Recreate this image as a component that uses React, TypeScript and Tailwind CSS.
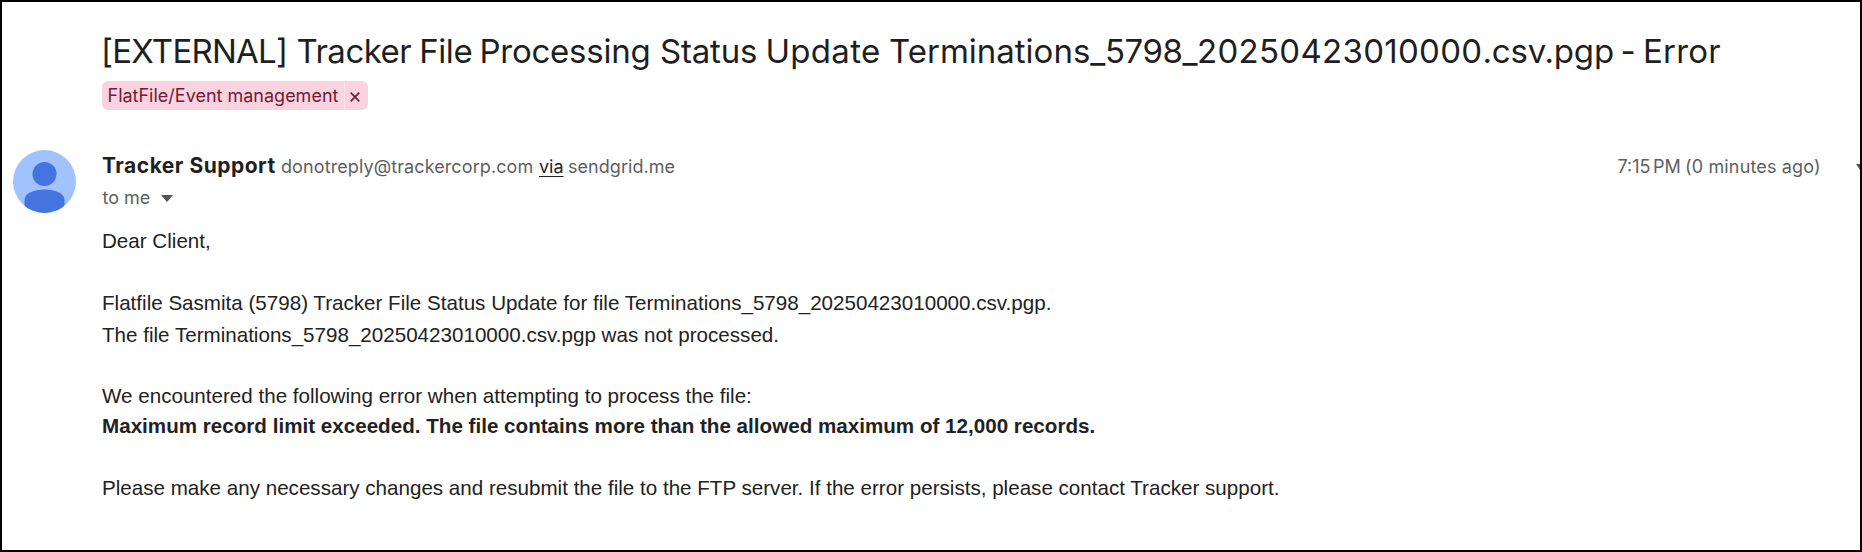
function Avatar() {
  return (
    <svg viewBox="0 0 64 64" className="block size-16" aria-hidden="true">
      <defs>
        <clipPath id="avatar-disc">
          <circle cx="31.5" cy="31.5" r="31.5" />
        </clipPath>
      </defs>
      <circle cx="31.5" cy="31.5" r="31.5" fill="#a0c3ff" />
      <g clipPath="url(#avatar-disc)" fill="#4374e0">
        <circle cx="31.5" cy="24" r="12" />
        <path d="M11.5 64V50C11.500 43 21.500 39.500 31.500 39.500s20 3.500 20 10.500v14z" />
      </g>
    </svg>
  );
}

function Subject() {
  return (
    <h1 className="flex h-[46px] text-[33px] leading-[46px] whitespace-pre text-[#1f1f1f]">
      <span className="w-[195.5px] tracking-[-0.75px]">[EXTERNAL]</span>
      <span className="w-[122.7px] tracking-[-0.5px]">Tracker</span>
      <span className="w-[60.3px] tracking-[-0.4px]">File</span>
      <span className="w-[180.5px] tracking-[-0.25px]">Processing</span>
      <span className="w-[105.5px] tracking-[-0.2px]">Status</span>
      <span className="w-[123.5px] tracking-[0.3px]">Update</span>
      <span className="w-[216px]">Terminations_</span>
      <span className="w-[92px] tracking-[-0.45px]">5798_</span>
      <span className="w-[285.5px] tracking-[0.3px]">20250423010000</span>
      <span className="w-[138px] tracking-[-0.2px]">.csv.pgp</span>
      <span className="w-[22.5px]">-</span>
      <span className="tracking-[0.2px]">Error</span>
    </h1>
  );
}

function Label() {
  return (
    <div className="flex h-[29px] w-[266px] overflow-hidden rounded-[6px] bg-[#fbd3e0] text-[#711a36]">
      <span className="w-[243px] border-r border-[#fde4ec] pl-[5.5px] text-[18px] leading-[29px] whitespace-nowrap">
        FlatFile/Event management
      </span>
      <span className="flex flex-1 items-center pt-[3px] pl-[5px]">
        <svg viewBox="0 0 10 10" className="size-[10px]" fill="none" stroke="#711a36" strokeWidth="1.7" aria-hidden="true">
          <path d="M.7.7l8.6 8.6M9.3.7L.7 9.3" />
        </svg>
      </span>
    </div>
  );
}

export default function App() {
  return (
    <main className="h-[552px] w-[1862px] overflow-hidden border-2 border-black bg-white font-['Inter',sans-serif]">
      <header className="pt-[26px] pl-[99px]">
        <Subject />
        <div className="mt-[7px] pl-px">
          <Label />
        </div>
      </header>
      <section className="mt-[40px] flex pl-[11px]">
        <Avatar />
        <div className="ml-[25px] flex-1">
          <div className="flex h-8 items-baseline text-[18px] leading-[30px] whitespace-nowrap text-[#5e5e5e]">
            <span className="w-[179px] text-[21px] leading-[31px] font-bold tracking-[0.5px] text-[#1f1f1f]">Tracker Support</span>
            <span className="w-[258px] tracking-[0.1px]">donotreply@trackercorp.com</span>
            <span className="w-[29px] text-[#222] underline underline-offset-[3px]">via</span>
            <span className="tracking-[0.05px]">sendgrid.me</span>
            <span className="ml-auto flex">
              <span className="w-[35.5px]">7:15</span>
              <span className="w-[32px]">PM</span>
              <span className="w-[136px] tracking-[0.15px]">(0 minutes ago)</span>
            </span>
            <svg viewBox="0 0 4 8" className="ml-[35px] h-2 w-1 -translate-y-[2px]" aria-hidden="true">
              <path d="M0 1h4v6z" fill="#555" />
            </svg>
          </div>
          <div className="flex h-8 items-center text-[18px] leading-8 text-[#5e5e5e]">
            <span className="w-[59px] pl-[0.5px]">to me</span>
            <svg viewBox="0 0 12 7" className="h-[7px] w-3" aria-hidden="true">
              <path d="M0 0h12L6 7z" fill="#555" />
            </svg>
          </div>
        </div>
      </section>
      <article className="mt-[12px] pl-[100px] font-['Liberation_Sans',Arial,sans-serif] text-[20.6px] whitespace-nowrap text-[#222]">
        <p className="h-[62px] leading-[30px]">Dear Client,</p>
        <p className="h-8 leading-[30px]">
          Flatfile Sasmita (5798) Tracker File Status Update for file Terminations_5798_20250423010000.csv.pgp.
        </p>
        <p className="h-[61px] leading-[30px]">The file Terminations_5798_20250423010000.csv.pgp was not processed.</p>
        <p className="h-[30px] leading-[30px]">We encountered the following error when attempting to process the file:</p>
        <p className="h-[62px] leading-[30px] font-bold tracking-[0.01px]">
          Maximum record limit exceeded. The file contains more than the allowed maximum of 12,000 records.
        </p>
        <p className="leading-[30px]">
          Please make any necessary changes and resubmit the file to the FTP server. If the error persists, please contact Tracker support.
        </p>
      </article>
    </main>
  );
}
